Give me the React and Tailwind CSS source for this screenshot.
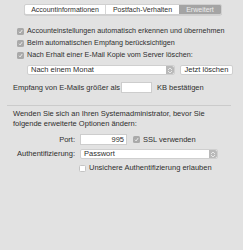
function Check({ checked }) {
  return (
    <span
      className={
        'flex h-[7px] w-[7px] shrink-0 items-center justify-center rounded-[1.5px] ' +
        (checked ? 'bg-[#a9a9a9]' : 'border border-[#c4c4c4] bg-white')
      }
    >
      {checked && (
        <svg width="5" height="5" viewBox="0 0 10 10">
          <path d="M2 5.5 L4.2 7.8 L8.3 2.2" fill="none" stroke="#f4f4f4" strokeWidth="1.8" />
        </svg>
      )}
    </span>
  )
}

function Stepper() {
  return (
    <span className="flex h-full w-[8px] flex-col items-center justify-center gap-[1px] rounded-r-[2px] bg-[#b9b9b9]">
      <svg width="4" height="2" viewBox="0 0 4 2">
        <path d="M0 2 L2 0 L4 2" fill="none" stroke="#f2f2f2" strokeWidth="0.8" />
      </svg>
      <svg width="4" height="2" viewBox="0 0 4 2">
        <path d="M0 0 L2 2 L4 0" fill="none" stroke="#f2f2f2" strokeWidth="0.8" />
      </svg>
    </span>
  )
}

function CheckRow({ label }) {
  return (
    <div className="flex h-[12px] items-center gap-[3px]">
      <Check checked />
      <span className="whitespace-nowrap text-[7.2px]">{label}</span>
    </div>
  )
}

export default function App() {
  return (
    <div
      className="h-[250px] w-[243px] overflow-hidden bg-[#e2e2e2] text-[7.5px] leading-[10px] text-[#2e2e2e]"
      style={{ fontFamily: '"Liberation Sans", Arial, sans-serif' }}
    >
      <div className="pt-[4px] pl-[24px]">
        <div className="flex h-[11px] w-[198px] overflow-hidden rounded-[2px] border border-[#d0d0d0] bg-white text-[7px] shadow-[0_0.5px_0.5px_rgba(0,0,0,0.15)]">
          <div className="flex w-[81px] items-center justify-center border-r border-[#d6d6d6]">Accountinformationen</div>
          <div className="flex w-[73px] items-center justify-center">Postfach-Verhalten</div>
          <div className="flex flex-1 items-center justify-center bg-[#a4a4a4] text-[#ececec]">Erweitert</div>
        </div>
      </div>

      <div className="mt-[10px] pl-[17px]">
        <CheckRow label="Accounteinstellungen automatisch erkennen und übernehmen" />
        <CheckRow label="Beim automatischen Empfang berücksichtigen" />
        <CheckRow label="Nach Erhalt einer E-Mail Kopie vom Server löschen:" />
      </div>

      <div className="mt-[4px] flex items-center pl-[27px]">
        <div className="flex h-[10px] w-[148px] items-center justify-between rounded-[2px] border border-[#cfcfcf] bg-white pl-[3px]">
          <span>Nach einem Monat</span>
          <Stepper />
        </div>
        <div className="ml-[5px] flex h-[10px] w-[53px] items-center justify-center rounded-[2px] border border-[#cfcfcf] bg-white">
          Jetzt löschen
        </div>
      </div>

      <div className="mt-[7px] flex items-center pl-[13px]">
        <span className="w-[108px] whitespace-nowrap">Empfang von E-Mails größer als</span>
        <div className="h-[11px] w-[31px] border border-[#cdcdcd] bg-white" />
        <span className="ml-[5px]">KB bestätigen</span>
      </div>

      <div className="mx-[7px] mt-[12px] h-px w-[224px] bg-[#cbcbcb]" />

      <div className="mt-[3px] pl-[13px]">
        <p>Wenden Sie sich an Ihren Systemadministrator, bevor Sie</p>
        <p>folgende erweiterte Optionen ändern:</p>
      </div>

      <div className="mt-[5px] flex items-center">
        <span className="w-[75px] text-right">Port:</span>
        <div className="ml-[5px] flex h-[11px] w-[47px] items-center justify-end border border-[#cdcdcd] bg-white pr-[2px]">995</div>
        <span className="ml-[6px]"><Check checked /></span>
        <span className="ml-[3px]">SSL verwenden</span>
      </div>

      <div className="mt-[4px] flex items-center">
        <span className="w-[75px] text-right">Authentifizierung:</span>
        <div className="ml-[5px] flex h-[10px] w-[138px] items-center justify-between rounded-[2px] border border-[#cfcfcf] bg-white pl-[3px]">
          <span>Passwort</span>
          <Stepper />
        </div>
      </div>

      <div className="mt-[4px] flex h-[10px] items-center pl-[79px]">
        <Check />
        <span className="ml-[3px]">Unsichere Authentifizierung erlauben</span>
      </div>
    </div>
  )
}
